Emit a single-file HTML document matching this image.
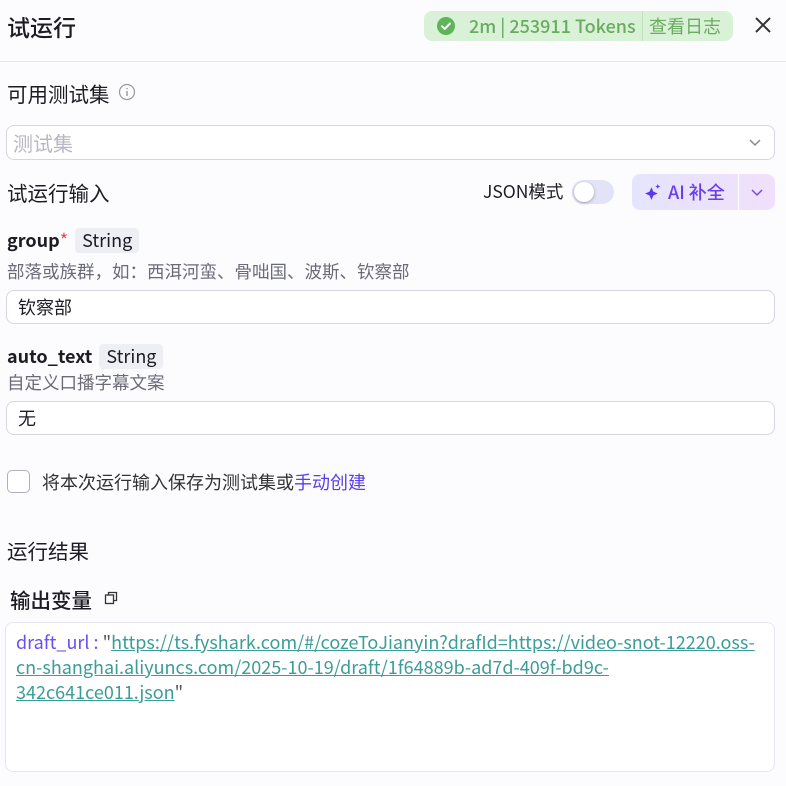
<!DOCTYPE html>
<html><head><meta charset="utf-8"><style>
*{box-sizing:border-box;margin:0;padding:0}
body{width:786px;height:786px;background:#fcfcff;font-family:"Noto Sans CJK SC","Liberation Sans",sans-serif;color:#1d1c23;position:relative;overflow:hidden}
.a{position:absolute}
.inp{position:absolute;left:6px;width:769px;border:1px solid #d6d6e0;border-radius:8px;background:#fff}
.tag{display:inline-block;background:#eeeff5;border-radius:4px;font-size:18px;line-height:25px;padding:0 7px;color:#1d1c23;font-weight:400;margin-left:7px}
.u{color:#3b9c98;text-decoration:underline}
</style></head><body>
<div class="a" style="left:7px;top:11px;font-size:23px;line-height:30px;font-weight:500">试运行</div>
<div class="a" style="left:424px;top:11px;width:309px;height:30px;background:#d9f2d7;border-radius:8px;color:#6aab60;font-size:18px;line-height:30px">
 <svg class="a" style="left:13px;top:6px" width="18" height="18" viewBox="0 0 18 18"><circle cx="9" cy="9" r="9" fill="#5fb45a"/><path d="M5 9.3l2.7 2.6L13 6.5" stroke="#fff" stroke-width="2" fill="none" stroke-linecap="round" stroke-linejoin="round"/></svg>
 <span class="a" style="left:45px;white-space:nowrap;font-weight:500">2m | 253911 Tokens</span>
 <span class="a" style="left:218px;top:0;height:30px;border-left:1px solid #bfe3bb"></span>
 <span class="a" style="left:225px;white-space:nowrap">查看日志</span>
</div>
<svg class="a" style="left:754px;top:16px" width="18" height="18" viewBox="0 0 18 18"><path d="M2 2L16 16M16 2L2 16" stroke="#333" stroke-width="2"/></svg>
<div class="a" style="left:0;top:61px;width:786px;height:1px;background:#e6e6ee"></div>
<div class="a" style="left:7px;top:79px;font-size:20.5px;line-height:28px">可用测试集</div>
<svg class="a" style="left:118px;top:83px" width="18" height="18" viewBox="0 0 18 18"><circle cx="9" cy="9" r="7.5" stroke="#999" fill="none" stroke-width="1.2"/><path d="M9 8v5M9 5v1.3" stroke="#999" stroke-width="1.4"/></svg>
<div class="inp" style="top:125px;height:35px"><span class="a" style="left:6px;top:3px;font-size:20px;line-height:28px;color:#b8b8c4">测试集</span>
<svg class="a" style="left:741px;top:11px" width="14" height="12" viewBox="0 0 14 12"><path d="M2 3l5 5 5-5" stroke="#888" stroke-width="1.4" fill="none"/></svg></div>
<div class="a" style="left:7px;top:178px;font-size:20.5px;line-height:28px">试运行输入</div>
<div class="a" style="left:483px;top:180px;font-size:17.5px;line-height:24px">JSON模式</div>
<div class="a" style="left:572px;top:180px;width:42px;height:24px;border-radius:12px;background:#e3e3f7"><div class="a" style="left:2px;top:2px;width:20px;height:20px;border-radius:50%;background:#fff;box-shadow:0 1px 3px rgba(0,0,0,.3)"></div></div>
<div class="a" style="left:632px;top:174px;width:143px;height:36px;border-radius:8px;background:linear-gradient(90deg,#e6e4fd,#f0e0fb)">
 <svg class="a" style="left:11px;top:9px" width="19" height="19" viewBox="0 0 18 18"><path d="M8 4l1.8 4.2L14 10l-4.2 1.8L8 16l-1.8-4.2L2 10l4.2-1.8z" fill="#5a3ae8"/><path d="M14 1l.7 1.6L16.3 3.3l-1.6.7L14 5.6l-.7-1.6L11.7 3.3l1.6-.7z" fill="#5a3ae8"/></svg>
 <span class="a" style="left:36px;top:6px;font-size:18px;line-height:24px;color:#6a3ee8;font-weight:500;white-space:nowrap">AI 补全</span>
 <span class="a" style="left:106px;top:0;height:36px;border-left:1px solid #fff"></span>
 <svg class="a" style="left:118px;top:13px" width="14" height="12" viewBox="0 0 14 12"><path d="M2 3l5 5 5-5" stroke="#7a4ae0" stroke-width="1.5" fill="none"/></svg>
</div>
<div class="a" style="left:7px;top:228px;font-size:18px;line-height:25px;font-weight:700">group<span style="color:#e5484d;font-weight:400">*</span><span class="tag">String</span></div>
<div class="a" style="left:7px;top:261px;font-size:17.5px;line-height:22px;color:#6b6b78;white-space:nowrap">部落或族群，如：西洱河蛮、骨咄国、波斯、钦察部</div>
<div class="inp" style="top:290px;height:34px"><span class="a" style="left:11px;top:4px;font-size:18px;line-height:25px">钦察部</span></div>
<div class="a" style="left:7px;top:344px;font-size:18px;line-height:25px;font-weight:700">auto_text<span class="tag">String</span></div>
<div class="a" style="left:7px;top:372px;font-size:17.5px;line-height:22px;color:#6b6b78">自定义口播字幕文案</div>
<div class="inp" style="top:401px;height:34px"><span class="a" style="left:11px;top:4px;font-size:18px;line-height:25px">无</span></div>
<div class="a" style="left:7px;top:470px;width:23px;height:23px;border:1.5px solid #b0b0bc;border-radius:5px;background:#fff"></div>
<div class="a" style="left:42px;top:470px;font-size:18px;line-height:24px;color:#333;white-space:nowrap">将本次运行输入保存为测试集或<span style="color:#5b3ee6">手动创建</span></div>
<div class="a" style="left:7px;top:536px;font-size:20.5px;line-height:28px">运行结果</div>
<div class="a" style="left:10px;top:585px;font-size:20.5px;line-height:28px;font-weight:500">输出变量</div>
<svg class="a" style="left:104px;top:591px" width="14" height="14" viewBox="0 0 14 14"><rect x="1.5" y="4" width="8" height="8.5" fill="none" stroke="#333" stroke-width="1.3"/><path d="M4.5 4V1.5h8v8H9.5" fill="none" stroke="#333" stroke-width="1.3"/></svg>
<div class="a" style="left:5px;top:622px;width:770px;height:150px;border:1px solid #e6e6ee;border-radius:8px;background:#fff"></div>
<div class="a" style="left:16px;top:630px;font-size:18px;line-height:25px;color:#3b9c98;white-space:nowrap">
<div><span style="color:#6b4ef0">draft_url : </span><span style="color:#555">"</span><span class="u">https://ts.fyshark.com/#/cozeToJianyin?drafId=https://video-snot-12220.oss-</span></div>
<div><span class="u">cn-shanghai.aliyuncs.com/2025-10-19/draft/1f64889b-ad7d-409f-bd9c-</span></div>
<div><span class="u">342c641ce011.json</span><span style="color:#555">"</span></div>
</div>
</body></html>
